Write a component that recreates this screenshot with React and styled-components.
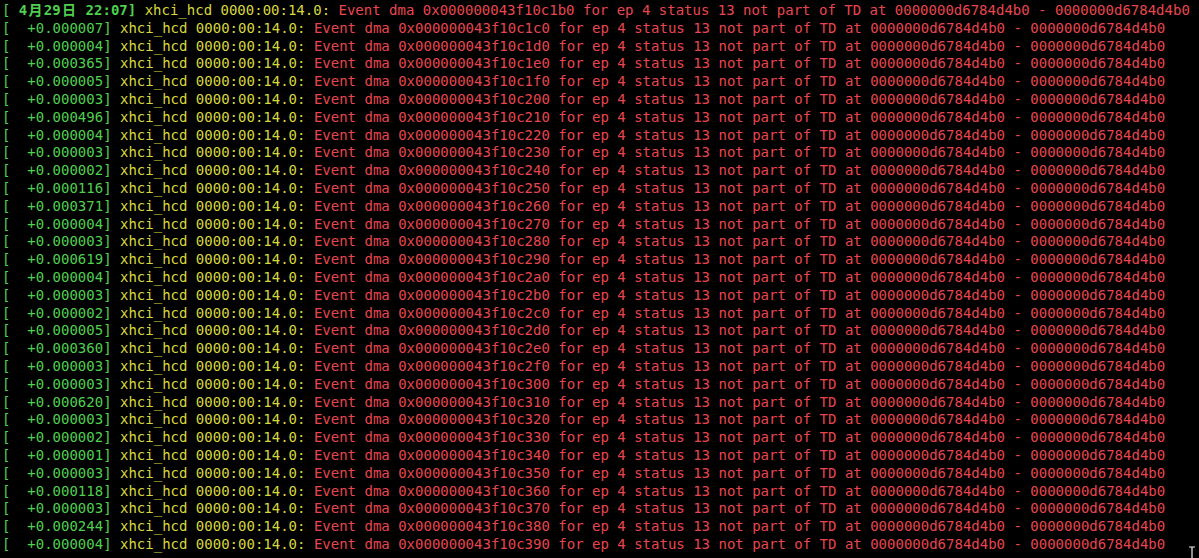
import styled, { createGlobalStyle } from 'styled-components';

const GlobalStyle = createGlobalStyle`
  html, body {
    margin: 0;
    padding: 0;
    background: #000;
  }
`

const Terminal = styled.div`
  position: relative;
  width: 1199px;
  height: 558px;
  overflow: hidden;
  background: #000;
  padding: 1px 0 0 2px;
  box-sizing: border-box;
  font-family: "DejaVu Sans Mono", "Liberation Mono", monospace;
  font-size: 14px;
  line-height: 17.8px;
`
const Line = styled.div`
  white-space: pre;
`
const Green = styled.span`
  color: #4fd04f;
  font-weight: ${p => (p.$bold ? 700 : 400)};
`
const Wide = styled.span`
  display: inline-block;
  width: 2ch;
  text-align: center;
  font-family: "Noto Sans CJK SC", "DejaVu Sans Mono", sans-serif;
`
const Facility = styled.span`
  color: #d8d83c;
`
const Message = styled.span`
  color: #e8464e;
`
const Cursor = styled.svg`
  position: absolute;
  left: 1187px;
  top: 546px;
`

const stamps = [
  '007', '004', '365', '005', '003', '496', '004', '003', '002', '116',
  '371', '004', '003', '619', '004', '003', '002', '005', '360', '003',
  '003', '620', '003', '002', '001', '003', '118', '003', '244', '004',
]

const msg = (addr) =>
  `Event dma 0x000000043f10${addr.toString(16)} for ep 4 status 13 not part of TD at 0000000d6784d4b0 - 0000000d6784d4b0`

function App() {
  return (
    <Terminal>
      <GlobalStyle />
      <Line>
        <Green>[</Green>
        <Green $bold> 4<Wide>月</Wide>29<Wide>日</Wide> 22:07]</Green>{' '}
        <Facility>xhci_hcd 0000:00:14.0:</Facility>{' '}
        <Message>{msg(0xc1b0)}</Message>
      </Line>
      {stamps.map((s, i) => (
        <Line key={i}>
          <Green>{`[  +0.000${s}]`}</Green>{' '}
          <Facility>xhci_hcd 0000:00:14.0:</Facility>{' '}
          <Message>{msg(0xc1c0 + i * 0x10)}</Message>
        </Line>
      ))}
      <Cursor width="10" height="14" viewBox="0 0 10 14">
        <path d="M2 1h6M5 1v12M2 13h6" stroke="#000" strokeWidth="3" fill="none" />
        <path d="M2 1h6M5 1v12M2 13h6" stroke="#eee" strokeWidth="1.2" fill="none" />
      </Cursor>
    </Terminal>
  )
}

export default App
